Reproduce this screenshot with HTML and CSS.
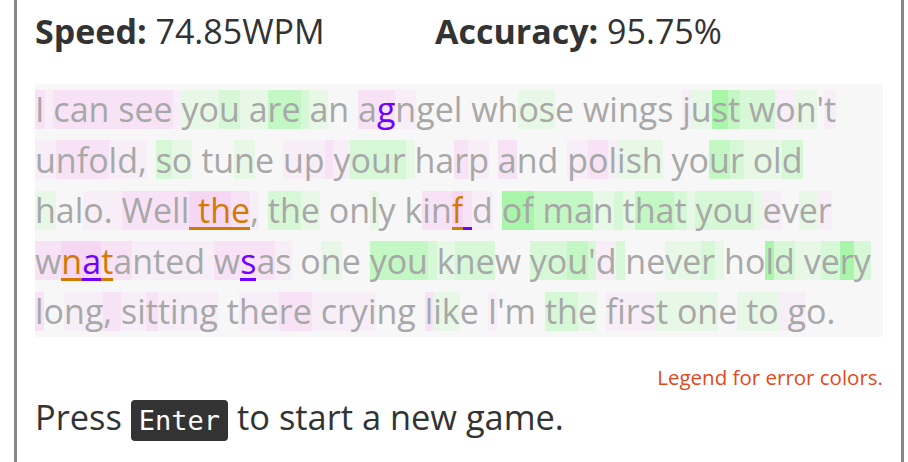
FILE: index.html
```html
<!DOCTYPE html>
<html lang="en">
<head>
<meta charset="utf-8">
<title>Typing game</title>
<link rel="stylesheet" href="styles.css">
</head>
<body>
<div class="game">
  <div class="stats">
    <div class="stat"><b>Speed:</b> 74.85WPM</div>
    <div class="stat"><b>Accuracy:</b> 95.75%</div>
  </div>
  <div class="text">
<span class="p2">I</span><span class="p1"> </span><span class="p2">can see</span><span class="p1"> </span><span class="g1">yo</span><span class="g2">u</span><span class="g1"> a</span><span class="g3">re</span><span class="g2"> </span><span class="g1">a</span>n <span class="p2">a</span><span class="p2 extra">g</span><span class="p1">n</span>gel wh<span class="g1">os</span>e wings <span class="p1">j</span><span class="g1">u</span><span class="g4">s</span><span class="g3">t</span><span class="g2"> w</span><span class="p1">o</span><span class="g1">n</span>'<span class="p1">t</span><br>
<span class="p1">u</span><span class="p2">nfo</span><span class="p1">ld,</span> <span class="g2">s</span><span class="g1">o</span> tu<span class="g1">n</span>e <span class="p1">up</span><span class="p2"> </span><span class="p1">y</span><span class="g2">our</span><span class="g1"> </span>ha<span class="p2">r</span><span class="p1">p</span> <span class="p2">a</span>nd <span class="p1">p</span><span class="p2">o</span><span class="p1">l</span><span class="g1">ish</span> yo<span class="g3">u</span><span class="g2">r</span><span class="g1"> ol</span><span class="g2">d</span><br>
<span class="g1">h</span>al<span class="p1">o. </span><span class="p2">Well</span><span class="p3 wrong"> th</span><span class="p2 wrong">e</span><span class="p1">,</span> <span class="g2">th</span><span class="g1">e</span> on<span class="g1">l</span>y k<span class="p2">in</span><span class="p3 wrong">f</span><span class="p2 added"> </span><span class="p1">d</span> <span class="g4">of</span><span class="g3"> ma</span><span class="g1">n</span><span class="g2"> </span><span class="g1">t</span><span class="g3">ha</span><span class="g2">t</span><span class="g1"> </span><span class="g2">you</span><span class="g1"> </span><span class="p1">e</span>v<span class="g1">e</span><span class="p1">r</span><br>
<span class="p2">w</span><span class="p3 wrong">n</span><span class="p3 added">a</span><span class="p2 wrong">t</span><span class="p2">a</span><span class="p1">nted </span><span class="p2">w</span><span class="p2 added">s</span><span class="p2">a</span><span class="p1">s</span> o<span class="g1">n</span>e <span class="g3">you</span><span class="g2"> </span><span class="g1">k</span><span class="g2">ne</span>w <span class="g2">yo</span><span class="g3">u</span><span class="g2">'</span><span class="p1">d</span><span class="g2"> </span>ne<span class="g1">ve</span><span class="g2">r</span><span class="g1"> </span>ho<span class="g4">l</span><span class="g2">d</span><span class="g1"> v</span><span class="g2">e</span><span class="g4">r</span><span class="g2">y</span><br>
<span class="p2">l</span>o<span class="p1">ng</span><span class="p2">, </span><span class="p1">si</span><span class="p2">t</span><span class="p1">ting</span> t<span class="p1">he</span><span class="p2">re</span><span class="p1"> cryi</span>ng <span class="p2">l</span><span class="g1">ik</span>e <span class="p1">I</span>'m <span class="g2">th</span><span class="g1">e</span> <span class="p1">firs</span><span class="g1">t on</span>e<span class="g1"> to</span><span class="p1"> g</span>o.
  </div>
  <div class="legend"><span class="legend-link">Legend for error colors.</span></div>
  <p class="restart">Press <kbd>Enter</kbd> to start a new game.</p>
</div>
</body>
</html>
```

FILE: styles.css
```css
body {
  margin: 0;
  background: #ffffff;
  color: #333333;
  font-family: "Open Sans", "Noto Sans", sans-serif;
}

.game {
  box-sizing: border-box;
  width: 890px;
  margin-left: 14px;
  padding: 9px 18px 18px;
  border: 3px solid #888888;
  border-top: none;
}

.stats {
  display: flex;
  font-size: 34px;
  line-height: 44px;
}

.stat:first-child {
  width: 400px;
}

.stat b {
  font-weight: 700;
}

.text {
  --hl: transparent;
  --ul: transparent;
  margin-top: 31px;
  background: #f7f7f7;
  color: #a8a8a8;
  font-size: 34px;
  line-height: 50.5px;
  white-space: nowrap;
}

.text span {
  background:
    linear-gradient(var(--ul), var(--ul)) 0 40px / 100% 3px no-repeat,
    linear-gradient(var(--hl), var(--hl)) 0 3.5px / 100% 39px no-repeat;
}

.p1 { --hl: #f7eef7; }
.p2 { --hl: #f8e3f6; }
.p3 { --hl: #f5d6f3; }
.g1 { --hl: #e7f8e7; }
.g2 { --hl: #d7f8d7; }
.g3 { --hl: #c3f7c3; }
.g4 { --hl: #a9f5a9; }

.extra {
  color: #7000ff;
}

.wrong {
  color: #d47a00;
  --ul: #d47a00;
}

.added {
  color: #7000ff;
  --ul: #7000ff;
}

.legend {
  margin-top: 27.5px;
  text-align: right;
  font-size: 20.5px;
  line-height: 26px;
}

.legend-link {
  color: #e2491c;
}

.restart {
  margin: 2px 0 0;
  font-size: 34.4px;
  line-height: 50px;
}

kbd {
  padding: 5px 8px;
  border-radius: 4px;
  background: #333333;
  color: #ffffff;
  font-family: "DejaVu Sans Mono", monospace;
  font-size: 27px;
}
```
